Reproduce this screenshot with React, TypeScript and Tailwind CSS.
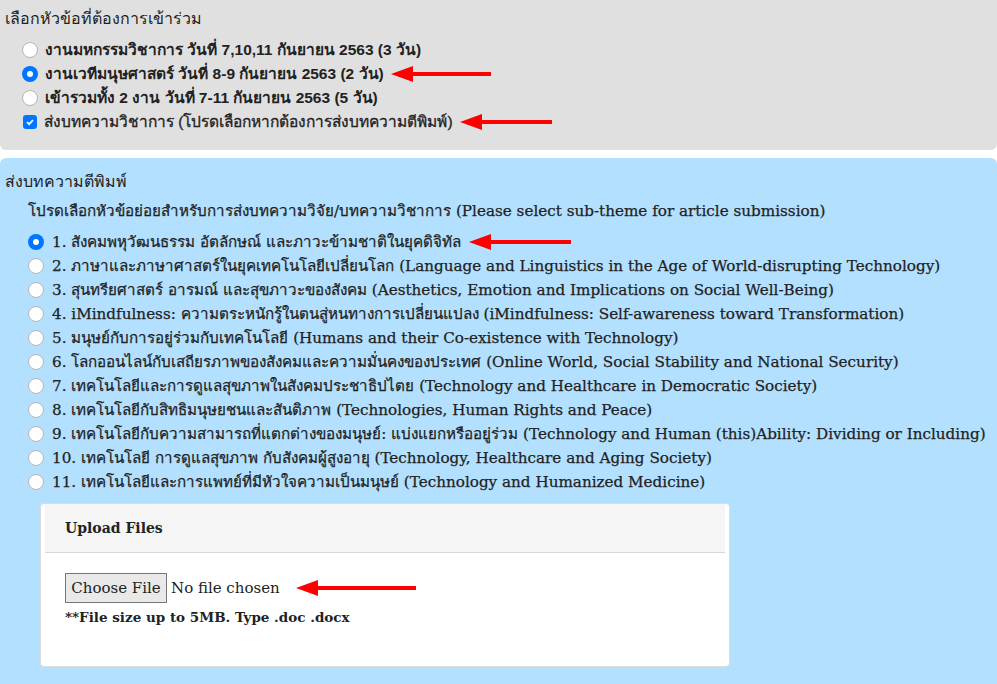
import React from "react";

const Arrow = ({ w }: { w: number }) => (
  <svg width={w} height="18" viewBox={`0 0 ${w} 18`} className="shrink-0">
    <polygon points={`0,9 22,1 22,17`} fill="#ff0000" />
    <rect x="18" y="7" width={w - 18} height="4" fill="#ff0000" />
  </svg>
);

const Radio = ({ checked = false }: { checked?: boolean }) =>
  checked ? (
    <span className="w-[16px] h-[16px] rounded-full bg-[#0075ff] flex items-center justify-center shrink-0">
      <span className="w-[6px] h-[6px] rounded-full bg-white" />
    </span>
  ) : (
    <span className="w-[16px] h-[16px] rounded-full bg-white border border-[#b5b5b5] shrink-0" />
  );

const Checkbox = () => (
  <span className="w-[14px] h-[14px] rounded-[3px] bg-[#0075ff] flex items-center justify-center shrink-0 ml-[1px]">
    <svg width="10" height="10" viewBox="0 0 10 10">
      <path d="M2 5.2 L4.2 7.2 L8 3" stroke="white" strokeWidth="1.8" fill="none" />
    </svg>
  </span>
);

const topics = [
  "1. สังคมพหุวัฒนธรรม อัตลักษณ์ และภาวะข้ามชาติในยุคดิจิทัล",
  "2. ภาษาและภาษาศาสตร์ในยุคเทคโนโลยีเปลี่ยนโลก (Language and Linguistics in the Age of World-disrupting Technology)",
  "3. สุนทรียศาสตร์ อารมณ์ และสุขภาวะของสังคม (Aesthetics, Emotion and Implications on Social Well-Being)",
  "4. iMindfulness: ความตระหนักรู้ในตนสู่หนทางการเปลี่ยนแปลง (iMindfulness: Self-awareness toward Transformation)",
  "5. มนุษย์กับการอยู่ร่วมกับเทคโนโลยี (Humans and their Co-existence with Technology)",
  "6. โลกออนไลน์กับเสถียรภาพของสังคมและความมั่นคงของประเทศ (Online World, Social Stability and National Security)",
  "7. เทคโนโลยีและการดูแลสุขภาพในสังคมประชาธิปไตย (Technology and Healthcare in Democratic Society)",
  "8. เทคโนโลยีกับสิทธิมนุษยชนและสันติภาพ (Technologies, Human Rights and Peace)",
  "9. เทคโนโลยีกับความสามารถที่แตกต่างของมนุษย์: แบ่งแยกหรืออยู่ร่วม (Technology and Human (this)Ability: Dividing or Including)",
  "10. เทคโนโลยี การดูแลสุขภาพ กับสังคมผู้สูงอายุ (Technology, Healthcare and Aging Society)",
  "11. เทคโนโลยีและการแพทย์ที่มีหัวใจความเป็นมนุษย์ (Technology and Humanized Medicine)",
];

export default function App() {
  return (
    <div className="w-[997px] h-[684px] bg-white overflow-hidden text-[#222]">
      {/* attendance options */}
      <div className="bg-[#e0e0e0] rounded-b-[6px] px-[5px] pt-[9px] pb-[16px] font-['Liberation_Sans',sans-serif]">
        <div className="text-[16px] leading-[20px]">เลือกหัวข้อที่ต้องการเข้าร่วม</div>
        <div className="mt-[9px] ml-[17px] flex flex-col text-[15.5px] font-bold leading-[24px]">
          <div className="flex items-center gap-[7px]">
            <Radio />
            <span>งานมหกรรมวิชาการ วันที่ 7,10,11 กันยายน 2563 (3 วัน)</span>
          </div>
          <div className="flex items-center gap-[7px]">
            <Radio checked />
            <span>งานเวทีมนุษศาสตร์ วันที่ 8-9 กันยายน 2563 (2 วัน)</span>
            <Arrow w={100} />
          </div>
          <div className="flex items-center gap-[7px]">
            <Radio />
            <span>เข้ารวมทั้ง 2 งาน วันที่ 7-11 กันยายน 2563 (5 วัน)</span>
          </div>
          <div className="flex items-center gap-[7px]">
            <Checkbox />
            <span className="font-normal [-webkit-text-stroke:0.3px]">ส่งบทความวิชาการ (โปรดเลือกหากต้องการส่งบทความตีพิมพ์)</span>
            <Arrow w={92} />
          </div>
        </div>
      </div>

      {/* article submission */}
      <div className="mt-[8px] h-[526px] bg-[#b3e0ff] rounded-t-[6px] px-[5px] pt-[14px] font-['DejaVu_Serif',serif]">
        <div className="text-[16px] leading-[20px] font-['Liberation_Sans',sans-serif]">ส่งบทความตีพิมพ์</div>
        <div className="mt-[7px] ml-[23px] text-[15.2px] leading-[24px] [-webkit-text-stroke:0.25px]">
          โปรดเลือกหัวข้อย่อยสำหรับการส่งบทความวิจัย/บทความวิชาการ (Please select sub-theme for article submission)
        </div>
        <div className="mt-[7px] ml-[23px] flex flex-col text-[15.2px] leading-[24px] [-webkit-text-stroke:0.25px]">
          {topics.map((t, i) => (
            <div key={i} className="flex items-center gap-[8px] whitespace-nowrap">
              <Radio checked={i === 0} />
              <span>{t}</span>
              {i === 0 && <Arrow w={102} />}
            </div>
          ))}
        </div>

        <div className="mt-[9px] ml-[35px] w-[690px] h-[164px] bg-white border border-[#dcdcdc] rounded-[4px] px-[4px]">
          <div className="h-[49px] bg-[#f5f5f5] border-b border-[#d8d8d8] flex items-center pl-[20px]">
            <span className="text-[14px] font-bold">Upload Files</span>
          </div>
          <div className="pl-[20px] pt-[20px]">
            <div className="flex items-center">
              <span className="h-[30px] w-[102px] border border-[#767676] bg-[#e9e9e9] flex items-center justify-center text-[15px]">
                Choose File
              </span>
              <span className="ml-[4px] text-[15px]">No file chosen</span>
              <span className="ml-[16px]">
                <Arrow w={120} />
              </span>
            </div>
            <div className="mt-[4px] text-[13.5px] font-bold leading-[20px]">**File size up to 5MB. Type .doc .docx</div>
          </div>
        </div>
      </div>
    </div>
  );
}
